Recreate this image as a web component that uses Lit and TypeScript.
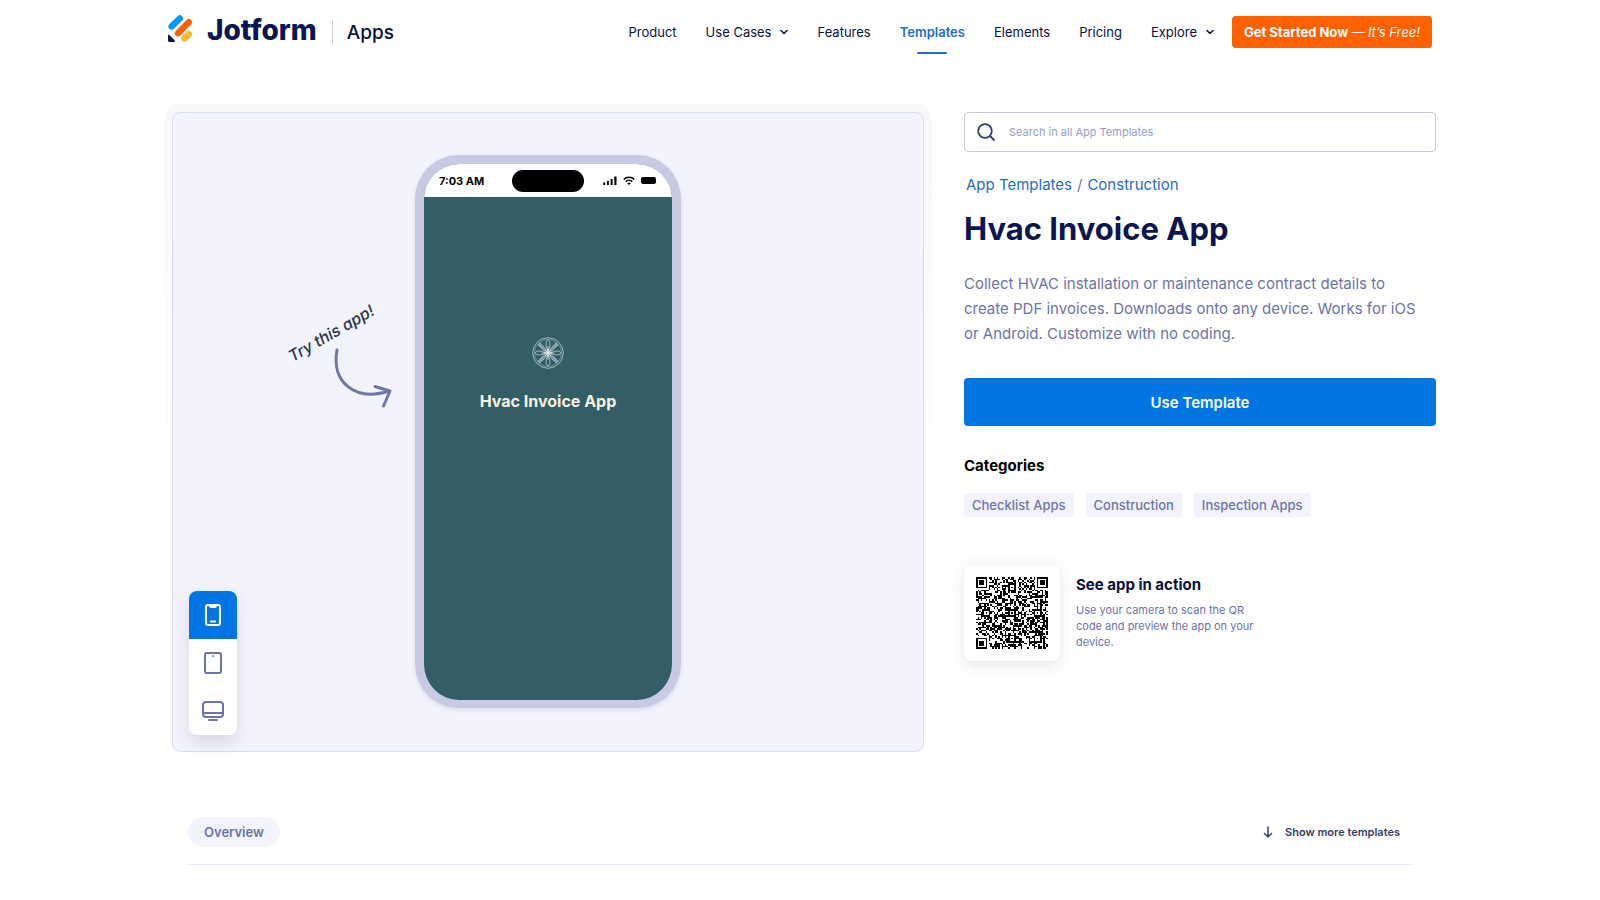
import { LitElement, html, svg, css } from "lit";
import { customElement, state } from "lit/decorators.js";

const NAV = [
  { label: "Product" },
  { label: "Use Cases", menu: true },
  { label: "Features" },
  { label: "Templates", active: true },
  { label: "Elements" },
  { label: "Pricing" },
  { label: "Explore", menu: true },
];

const CATEGORIES = ["Checklist Apps", "Construction", "Inspection Apps"];

const QR_SIZE = 45;

/** Ring pattern of a square marker: distance from its centre decides dark or light. */
function ring(x: number, y: number, cx: number, cy: number, radius: number): boolean | null {
  const d = Math.max(Math.abs(x - cx), Math.abs(y - cy));
  if (d > radius) return null;
  if (radius === 4) return d <= 1 || d === 3;
  return d !== 1;
}

function qrPath(): string {
  let seed = 20231;
  const next = () => {
    seed = (Math.imul(seed, 1103515245) + 12345) & 0x7fffffff;
    return (seed >> 12) & 1;
  };
  const finders = [[3, 3], [41, 3], [3, 41]];
  const aligns = [[22, 6], [6, 22], [22, 22], [38, 22], [22, 38], [38, 38]];
  let d = "";
  for (let y = 0; y < QR_SIZE; y++) {
    for (let x = 0; x < QR_SIZE; x++) {
      let dark: boolean | null = null;
      for (const [cx, cy] of finders) dark = dark ?? ring(x, y, cx, cy, 4);
      for (const [cx, cy] of aligns) dark = dark ?? ring(x, y, cx, cy, 2);
      const noise = next() === 1;
      if (dark === null && (x === 6 || y === 6)) dark = (x + y) % 2 === 0;
      if (dark ?? noise) d += `M${x} ${y}h1v1h-1z`;
    }
  }
  return d;
}

const chevron = html`<svg class="chevron" width="8" height="6" viewBox="0 0 8 6" fill="none" stroke="currentColor" stroke-width="1.5" stroke-linecap="round" stroke-linejoin="round" aria-hidden="true"><path d="M1 1.5l3 3 3-3" /></svg>`;

const DEVICES = [
  {
    id: "phone",
    label: "Phone preview",
    icon: svg`<rect x="5" y="2" width="14" height="20" rx="2" /><path d="M9 2.5v.5a1 1 0 0 0 1 1h4a1 1 0 0 0 1-1v-.5M10 18.6h4" />`,
  },
  {
    id: "tablet",
    label: "Tablet preview",
    icon: svg`<rect x="4" y="2" width="16" height="20" rx="2" /><path d="M12 5h.01" />`,
  },
  {
    id: "desktop",
    label: "Desktop preview",
    icon: svg`<rect x="2" y="3" width="20" height="15" rx="3" /><path d="M2 14h20M8 21h8" />`,
  },
];

@customElement("app-root")
export class AppRoot extends LitElement {
  @state() private device = "phone";

  static styles = css`
    :host {
      display: block;
      font-family: Inter, "Liberation Sans", sans-serif;
      color: #0a1551;
      background: #fff;
    }
    * { box-sizing: border-box; }
    h1, h2, p, ul, ol { margin: 0; padding: 0; }
    ul, ol { list-style: none; }
    a { color: inherit; text-decoration: none; }
    button { font: inherit; border: 0; cursor: pointer; padding: 0; }
    svg { display: block; flex: none; }

    .header {
      max-width: 1264px;
      height: 64px;
      margin: 0 auto;
      display: flex;
      align-items: center;
      justify-content: space-between;
    }
    .brand { display: flex; align-items: center; }
    .logo { display: flex; align-items: center; gap: 14px; padding-bottom: 4px; font-size: 28px; line-height: 32px; font-weight: 800; }
    .product { margin-left: 15px; padding-left: 14px; border-left: 1px solid #c8ceed; font-size: 19px; line-height: 25px; font-weight: 500; color: #091141; }
    .nav { display: flex; align-items: center; gap: 18px; }
    .links { display: flex; gap: 29px; font-size: 13px; line-height: 40px; color: #091141; }
    .link { display: flex; align-items: center; gap: 9px; height: 40px; }
    .active { position: relative; color: #2170c8; font-weight: 600; }
    .active::after { content: ""; position: absolute; left: 50%; bottom: -2px; width: 30px; height: 2px; margin-left: -15px; border-radius: 1px; background: #2170c8; }
    .cta { height: 32px; padding: 0 12px; border-radius: 4px; background: #ff6100; color: #fff; font-size: 13px; line-height: 32px; font-weight: 700; }
    .cta em { font-weight: 400; }

    .main {
      max-width: 1272px;
      margin: 40px auto 0;
      display: grid;
      grid-template-columns: minmax(0, 768fr) minmax(0, 472fr);
      gap: 32px;
    }
    .halo { padding: 8px; border-radius: 16px; background: linear-gradient(#f7f7f8, #fff 60%); }
    .stage {
      position: relative;
      display: flex;
      justify-content: center;
      padding: 42px 0 43px;
      border: 1px solid #dadef3;
      border-radius: 8px;
      background: #f3f3fe;
    }
    .hint { position: absolute; left: calc(50% - 264px); top: 184px; width: 120px; color: #2b3245; }
    .hint-text { position: absolute; left: -8px; top: 26px; width: 110px; text-align: center; transform: rotate(-30deg); font-size: 16px; line-height: 20px; font-style: italic; font-weight: 500; white-space: nowrap; }
    .hint-arrow { position: absolute; left: 49px; top: 49px; }

    .phone { width: 266px; height: 553px; border: 9px solid #c8c9e2; border-bottom-width: 8px; border-radius: 44px; overflow: hidden; background: #335e66; display: flex; flex-direction: column; box-shadow: 0 2px 4px rgba(84, 95, 111, 0.16); }
    .status { display: grid; grid-template-columns: 1fr 72px 1fr; align-items: center; height: 33px; background: #fff; color: #000; }
    .time { padding-left: 15px; font-size: 11px; line-height: 16px; font-weight: 700; white-space: nowrap; }
    .island { height: 22px; border-radius: 11px; background: #000; }
    .signals { display: flex; align-items: center; justify-content: flex-end; gap: 6px; padding-right: 16px; }
    .splash { flex: 1; display: flex; flex-direction: column; align-items: center; padding-top: 140px; gap: 20px; color: #f8f1e2; font-size: 16px; line-height: 24px; font-weight: 700; }

    .devices { position: absolute; left: 16px; bottom: 16px; display: flex; flex-direction: column; border-radius: 8px; overflow: hidden; background: #fff; box-shadow: 0 8px 16px rgba(84, 95, 111, 0.16); }
    .device { width: 48px; height: 48px; display: grid; place-items: center; background: #fff; color: #6c73a8; }
    .device.on { background: #0075e3; color: #fff; }

    .info { padding-top: 8px; }
    .search { display: flex; align-items: center; gap: 14px; height: 40px; padding: 0 12px; border: 1px solid #c3cad8; border-radius: 4px; color: #343c6a; }
    .search input { flex: 1; min-width: 0; border: 0; outline: 0; padding: 0; background: none; font: inherit; font-size: 11px; color: inherit; }
    .search input::placeholder { color: #979dc6; opacity: 1; }
    .crumbs { display: flex; gap: 5px; margin-top: 21px; padding-left: 2px; font-size: 15px; line-height: 24px; color: #6c73a8; }
    .crumbs a { color: #1f6dc4; }
    .title { margin-top: 12px; font-size: 31px; line-height: 40px; font-weight: 700; }
    .lead { max-width: 464px; margin-top: 22px; font-size: 15px; line-height: 25px; color: #6c73a8; }
    .use { display: block; width: 100%; height: 48px; margin-top: 32px; border-radius: 4px; background: #0075e3; color: #fff; font-size: 15px; font-weight: 600; }
    .heading { font-size: 15px; line-height: 24px; font-weight: 700; }
    .categories { margin-top: 28px; color: #000; }
    .chips { display: flex; flex-wrap: wrap; gap: 12px; margin-top: 15px; }
    .chip { display: block; padding: 0 8px; border-radius: 2px; background: #f3f3fe; color: #6c73a8; font-size: 13px; line-height: 24px; font-weight: 500; }
    .action { display: flex; gap: 16px; margin-top: 48px; }
    .qr { padding: 12px; height: 96px; border-radius: 8px; background: #fff; box-shadow: 0 4px 16px rgba(84, 95, 111, 0.16); }
    .scan { width: 188px; padding-top: 8px; color: #091141; }
    .scan p { margin-top: 5px; font-size: 11px; line-height: 16px; color: #6c73a8; }

    .bar { max-width: 1224px; margin: 57px auto 0; padding-bottom: 17px; display: flex; align-items: center; justify-content: space-between; border-bottom: 1px solid #e3e5f5; }
    .tab { height: 30px; padding: 0 16px; border-radius: 15px; background: #f3f3fe; color: #6c73a8; font-size: 13px; line-height: 30px; font-weight: 600; }
    .more { display: flex; align-items: center; gap: 12px; padding-right: 12px; background: none; color: #343c6a; font-size: 11px; line-height: 16px; font-weight: 600; }
  `;

  private header() {
    return html`<header class="header">
      <div class="brand">
        <a class="logo" href="#">
          <svg width="25" height="30" viewBox="0 0 25 30" aria-hidden="true">
            <g fill="none" stroke-width="6.4" stroke-linecap="round">
              <path d="M3.6 11.6l8.2-8.2" stroke="#0099ff" />
              <path d="M10 18.2L20.8 7.2" stroke="#ff6100" />
              <path d="M16.4 23.600l4.400-4.400" stroke="#ffb629" />
            </g>
            <path d="M0 20.600c0-.8.9-1.100 1.400-.6l5.300 5.500c.6.6.2 1.500-.6 1.500H1.600A1.600 1.600 0 0 1 0 25.400z" fill="#0a1551" />
          </svg>
          <span>Jotform</span>
        </a>
        <a class="product" href="#">Apps</a>
      </div>
      <nav class="nav" aria-label="Main">
        <ul class="links">
          ${NAV.map((n) => html`<li><a class="link ${n.active ? "active" : ""}" href="#">${n.label}${n.menu ? chevron : ""}</a></li>`)}
        </ul>
        <a class="cta" href="#">Get Started Now <em>— It’s Free!</em></a>
      </nav>
    </header>`;
  }

  private stage() {
    return html`<div class="halo"><div class="stage">
      <div class="hint">
        <span class="hint-text">Try this app!</span>
        <svg class="hint-arrow" width="62" height="62" viewBox="0 0 62 62" fill="none" stroke="#6f76a7" stroke-width="3" stroke-linecap="round" stroke-linejoin="round" aria-hidden="true">
          <path d="M4 4C-2 36 22 56 56 45M42 40.500L57 45 50.500 60" />
        </svg>
      </div>
      <div class="phone">
        <div class="status">
          <span class="time">7:03 AM</span>
          <span class="island"></span>
          <span class="signals">
            <svg width="14" height="9" viewBox="0 0 14 9" aria-hidden="true"><path d="M.2 6.500h2v2.500h-2zM3.900 5h2v4h-2zM7.600 3h2v6h-2zM11.300 .5h2.200V9h-2.200z" /></svg>
            <svg width="12" height="9" viewBox="0 0 12 9" fill="none" stroke="#000" stroke-width="1.500" aria-hidden="true"><path d="M.8 3.400a7.500 7.500 0 0 1 10.400 0M2.800 5.600a4.600 4.600 0 0 1 6.400 0" /><path d="M4.300 7.200a2.600 2.600 0 0 1 3.400 0L6 9z" fill="#000" stroke="none" /></svg>
            <svg width="15" height="7" viewBox="0 0 15 7" aria-hidden="true"><rect width="15" height="7" rx="2" /></svg>
          </span>
        </div>
        <div class="splash">
          <svg width="32" height="32" viewBox="0 0 32 32" fill="none" stroke="#9dbabc" stroke-width="1" aria-hidden="true">
            <circle cx="16" cy="16" r="15.300" /><circle cx="16" cy="16" r="13.600" stroke-width=".6" />
            <path d="M6.500 6.500l19 19M25.500 6.500l-19 19" stroke="#7f9fa3" stroke-width="3.200" />
            ${[0, 90, 180, 270].map((a) => svg`<g transform="rotate(${a} 16 16)">
              <path d="M16 16V9M16 13.500c-1.800-3-2.400-6-1.600-8.800.5-1.600 2.700-1.600 3.200 0 .8 2.800.2 5.800-1.600 8.800z" stroke="#b7cbca" stroke-width=".8" />
              <path d="M19 11.500l5.500-6M20.500 13l6-5.500" stroke-width=".7" />
              <path d="M16 16l3-3" stroke="#e6ece6" stroke-width=".8" />
            </g>`)}
            <path d="M16 11.500v9M11.500 16h9" stroke="#f0f2ea" stroke-width="1" />
          </svg>
          <span>Hvac Invoice App</span>
        </div>
      </div>
      <div class="devices" role="group" aria-label="Preview device">
        ${DEVICES.map((d) => html`<button class="device ${this.device === d.id ? "on" : ""}" aria-label=${d.label} aria-pressed=${this.device === d.id} @click=${() => (this.device = d.id)}>
          <svg width="24" height="24" viewBox="0 0 24 24" fill="none" stroke="currentColor" stroke-width="2" stroke-linecap="round" stroke-linejoin="round">${d.icon}</svg>
        </button>`)}
      </div>
    </div></div>`;
  }

  private info() {
    return html`<section class="info">
      <label class="search">
        <svg width="18" height="18" viewBox="0 0 18 18" fill="none" stroke="currentColor" stroke-width="1.800" stroke-linecap="round" aria-hidden="true"><circle cx="8" cy="8" r="6.800" /><path d="M13 13l4 4" /></svg>
        <input type="search" aria-label="Search in all App Templates" placeholder="Search in all App Templates" />
      </label>
      <nav class="crumbs" aria-label="Breadcrumb"><a href="#">App Templates</a><span>/</span><a href="#">Construction</a></nav>
      <h1 class="title">Hvac Invoice App</h1>
      <p class="lead">Collect HVAC installation or maintenance contract details to create PDF invoices. Downloads onto any device. Works for iOS or Android. Customize with no coding.</p>
      <button class="use">Use Template</button>
      <h2 class="heading categories">Categories</h2>
      <ul class="chips">${CATEGORIES.map((c) => html`<li><a class="chip" href="#">${c}</a></li>`)}</ul>
      <div class="action">
        <div class="qr"><svg width="72" height="72" viewBox="0 0 45 45" shape-rendering="crispEdges" role="img" aria-label="QR code"><path d=${qrPath()} /></svg></div>
        <div class="scan">
          <h2 class="heading">See app in action</h2>
          <p>Use your camera to scan the QR code and preview the app on your device.</p>
        </div>
      </div>
    </section>`;
  }

  render() {
    return html`${this.header()}
      <main>
        <div class="main">${this.stage()}${this.info()}</div>
        <div class="bar">
          <button class="tab">Overview</button>
          <button class="more">
            <svg width="10" height="12" viewBox="0 0 10 12" fill="none" stroke="currentColor" stroke-width="1.500" stroke-linecap="round" stroke-linejoin="round" aria-hidden="true"><path d="M5 1v10M1.500 7.500L5 11l3.500-3.500" /></svg>
            Show more templates
          </button>
        </div>
      </main>`;
  }
}
